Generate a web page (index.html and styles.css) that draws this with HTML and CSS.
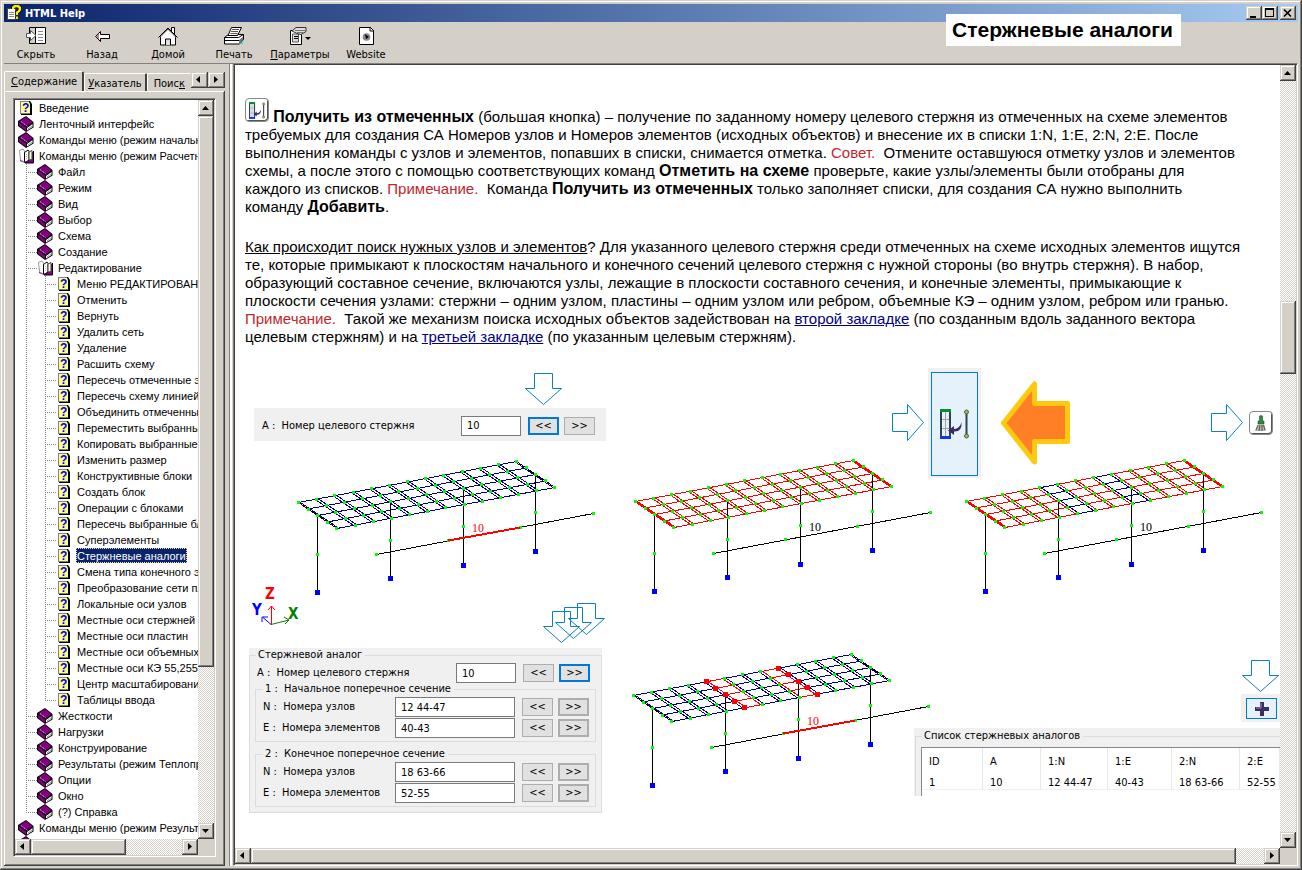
FILE: index.html
```
<!DOCTYPE html>
<html lang="ru">
<head>
  <meta charset="UTF-8">
  <meta name="viewport" content="width=device-width, initial-scale=1.0">
  <title>HTML Help</title>
  <link rel="stylesheet" href="styles.css">
</head>
<body>
  <svg class="sprite" aria-hidden="true">
    <symbol id="book" viewBox="0 0 16 16">
      <path d="M0 5v5l8 6 7.500-4.500V6L8 0z" fill="#000"/>
      <path d="M9 12l5.500-4v3L9 14.500z" fill="#fff"/>
      <path d="M10 13l4-3" stroke="#999" stroke-width="1"/>
      <path d="M1 5.500L8 1l6.500 5L9 10.500z" fill="#800080"/>
      <path d="M1 6.500l7 5V15L1 9.500z" fill="#800080"/>
      <path d="M3 5.500l6.500 5" stroke="#fff" stroke-dasharray="1 1" stroke-width=".8"/>
    </symbol>
    <symbol id="openbook" viewBox="0 0 16 16">
      <path d="M2 4v9l5 2h8V4" fill="#800080"/>
      <path d="M15.500 3v12H7" fill="none" stroke="#000"/>
      <path d="M1.500 2.500L5 1l1.500 2v11l-4-2z" fill="#fff" stroke="#999"/>
      <path d="M6.500 14V4.500L10 2l1 1.500V12L8 14z" fill="#fff" stroke="#000"/>
      <path d="M11 12V4l3-1.500v9z" fill="#ffd" stroke="#444"/>
      <path d="M8.500 6v5" stroke="#bbb" stroke-dasharray="1 1"/>
    </symbol>
    <symbol id="page" viewBox="0 0 16 16">
      <path d="M3 1h9l2 3v11H3z" fill="#000"/>
      <path d="M2 1h9v3h1v10H2z" fill="#808080"/>
      <path d="M3 2h8l1 2v9H3z" fill="#ffff90"/>
      <text x="4" y="12" font-family="Liberation Sans" font-size="12" font-weight="bold" fill="#0000e0">?</text>
    </symbol>
    <symbol id="up" viewBox="0 0 16 16"><path d="M4 10h7L7.500 6z"/></symbol>
    <symbol id="down" viewBox="0 0 16 16"><path d="M4 6h7l-3.500 4z"/></symbol>
    <symbol id="left" viewBox="0 0 16 16"><path d="M9 4v7L5 7.500z"/></symbol>
    <symbol id="right" viewBox="0 0 16 16"><path d="M6 4v7l4-3.500z"/></symbol>
    <symbol id="arrow-down" viewBox="0 0 38 33">
      <path d="M9.500 .5h18v15h9L18.500 31.500 .5 15.500h9z" fill="none" stroke="#0a7fc2"/>
    </symbol>
    <symbol id="arrow-right" viewBox="0 0 33 38">
      <path d="M.5 9.500h15v-9L31.500 18.500 15.500 36.500v-9H.5z" fill="none" stroke="#0a7fc2"/>
    </symbol>
    <symbol id="collect" viewBox="0 0 29 30">
      <path d="M0 0h11v30H0z" fill="#2c4450"/>
      <path d="M2 3h7v24H2z" fill="#e8eff4"/>
      <path d="M5.500 3v24M2 10.500h7M2 19.500h7" stroke="#9aa4aa"/>
      <path d="M0 0h11v3H0z" fill="#009030"/>
      <path d="M0 27h11v3H0z" fill="#1432f0"/>
      <path d="M8 21.500l6-4.500v3q6-.5 7.500-7 1 10-7.500 9.500V26z" fill="#3c2c64"/>
      <path d="M26.500 3v24" stroke="#2c4450" stroke-width="2"/>
      <circle cx="26.500" cy="3" r="2" fill="#a6b070" stroke="#5c6430"/>
      <circle cx="26.500" cy="27" r="2" fill="#a6b070" stroke="#5c6430"/>
    </symbol>
  </svg>

  <div class="window">
    <header class="titlebar">
      <svg class="app-icon" width="16" height="16" viewBox="0 0 16 16">
        <path d="M1.500 3.500h8v11h-8z" fill="#fff" stroke="#444"/>
        <path d="M3 7.500h5M3 9.500h5M3 11.500h5" stroke="#888"/>
        <path d="M7 4q0-3 3.500-3T14 4q0 2-3 3.500V10M11 11.500V14" fill="none" stroke="#000" stroke-width="4"/>
        <path d="M7 4q0-3 3.500-3T14 4q0 2-3 3.500V10M11 11.500V14" fill="none" stroke="#ffeb00" stroke-width="2.400"/>
      </svg>
      <span class="caption">HTML Help</span>
      <button class="win-btn" aria-label="Свернуть"><svg width="14" height="12"><path d="M3 9h6v2H3z"/></svg></button>
      <button class="win-btn" aria-label="Развернуть"><svg width="14" height="12"><path d="M2 1h9v9H2zM3 3v6h7V3z" fill-rule="evenodd"/></svg></button>
      <button class="win-btn close" aria-label="Закрыть"><svg width="14" height="12"><path d="M3 2.500l7 7M10 2.500l-7 7" stroke="#000" stroke-width="1.600"/></svg></button>
    </header>

    <nav class="toolbar">
      <button class="tool">
        <svg width="22" height="20" viewBox="0 0 22 20">
          <path d="M4.500 1.500h16v16h-16z" fill="#fff" stroke="#000"/><path d="M5 2h5v15H5z" fill="#d4d0c8"/><path d="M10.500 2v15" stroke="#000"/>
          <path d="M13 5.500h5M13 8.500h5M13 11.500h5M13 14.500h5" stroke="#888"/>
          <path d="M1.500 7.500h4v-3L11 9.500l-5.500 5v-3h-4z" fill="#fff" stroke="#555"/>
        </svg>
        <span>Скрыть</span>
      </button>
      <button class="tool">
        <svg width="20" height="20" viewBox="0 0 20 20"><path d="M3.500 10.500l5-5v3h9v4h-9v3z" fill="#fff" stroke="#000"/><path d="M4 10.500l3-3v6z" fill="#b58a8a"/></svg>
        <span>Назад</span>
      </button>
      <button class="tool">
        <svg width="22" height="20" viewBox="0 0 22 20">
          <path d="M14.500 1.500h3v7h-3z" fill="#fff" stroke="#000"/><path d="M3.500 10v9h15v-9L11 3z" fill="#fff" stroke="#000"/>
          <path d="M1.500 11.500L11 2l9.500 9.500" fill="none" stroke="#000"/><path d="M3 11.500l8-8 8 8" fill="none" stroke="#aaa"/><path d="M8.500 19v-6h5v6" fill="#ddd" stroke="#000"/>
        </svg>
        <span>Домой</span>
      </button>
      <button class="tool">
        <svg width="22" height="20" viewBox="0 0 22 20">
          <path d="M1.500 11.500l4-3h15v5l-4 4.500h-15z" fill="#fff" stroke="#000"/><path d="M1.500 11.500h14l5-3M1.500 14.500h15l4-3" fill="none" stroke="#000"/>
          <path d="M5 9.500L8.500 1.500h10l-4 8z" fill="#fff" stroke="#000"/><path d="M9 3.500h7M8 5.500h7M7.500 7.500h7" stroke="#555"/><path d="M16 14l4-3v3l-4 4z" fill="#777"/><path d="M17 17.500h3" stroke="#0dd"/>
        </svg>
        <span>Печать</span>
      </button>
      <button class="tool">
        <svg width="22" height="20" viewBox="0 0 22 20">
          <path d="M1.500 4.500h11v14h-11z" fill="#fff" stroke="#000"/><path d="M3.500 8v8h6V8z" fill="#ddd" stroke="#555"/><path d="M5 10.500h4M5 12.500h4" stroke="#000"/>
          <path d="M3 5l4-3.500h10v4l-5 3-4-1z" fill="#ddd" stroke="#333"/><path d="M6 4.500h10M8 6.500h6" stroke="#777"/><path d="M16 11h6l-3 3z"/>
        </svg>
        <span><u>П</u>араметры</span>
      </button>
      <button class="tool">
        <svg width="20" height="20" viewBox="0 0 20 20"><path d="M3.500 1.500h11l3 3v14h-14z" fill="#fff" stroke="#000"/><path d="M14 1v4h4" fill="none" stroke="#000"/><circle cx="10.500" cy="11" r="3.800" fill="#888"/><path d="M9 8l4 3-3 2z" fill="#000"/></svg>
        <span>Website</span>
      </button>
    </nav>

    <h1 class="topic-title">Стержневые аналоги</h1>

    <div class="panes">
      <aside class="sidebar">
        <div class="tabs">
          <button class="tab active"><u>С</u>одержание</button>
          <button class="tab"><u>У</u>казатель</button>
          <button class="tab last">Поис<u>к</u></button>
          <button class="sb-btn" aria-label="Назад"><svg><use href="#left"/></svg></button>
          <button class="sb-btn" aria-label="Вперед"><svg><use href="#right"/></svg></button>
        </div>
        <div class="tab-page">
          <div class="scrollbox">
            <ul class="tree">
              <li><a href="#"><svg><use href="#page"/></svg>Введение</a></li>
              <li><a href="#"><svg><use href="#book"/></svg>Ленточный интерфейс</a></li>
              <li><a href="#"><svg><use href="#book"/></svg>Команды меню (режим начальный)</a></li>
              <li><a href="#"><svg><use href="#openbook"/></svg>Команды меню (режим Расчетная схема)</a>
                <ul>
                  <li><a href="#"><svg><use href="#book"/></svg>Файл</a></li>
                  <li><a href="#"><svg><use href="#book"/></svg>Режим</a></li>
                  <li><a href="#"><svg><use href="#book"/></svg>Вид</a></li>
                  <li><a href="#"><svg><use href="#book"/></svg>Выбор</a></li>
                  <li><a href="#"><svg><use href="#book"/></svg>Схема</a></li>
                  <li><a href="#"><svg><use href="#book"/></svg>Создание</a></li>
                  <li><a href="#"><svg><use href="#openbook"/></svg>Редактирование</a>
                    <ul>
                      <li><a href="#"><svg><use href="#page"/></svg>Меню РЕДАКТИРОВАНИЕ</a></li>
                      <li><a href="#"><svg><use href="#page"/></svg>Отменить</a></li>
                      <li><a href="#"><svg><use href="#page"/></svg>Вернуть</a></li>
                      <li><a href="#"><svg><use href="#page"/></svg>Удалить сеть</a></li>
                      <li><a href="#"><svg><use href="#page"/></svg>Удаление</a></li>
                      <li><a href="#"><svg><use href="#page"/></svg>Расшить схему</a></li>
                      <li><a href="#"><svg><use href="#page"/></svg>Пересечь отмеченные элементы</a></li>
                      <li><a href="#"><svg><use href="#page"/></svg>Пересечь схему линией</a></li>
                      <li><a href="#"><svg><use href="#page"/></svg>Объединить отмеченные</a></li>
                      <li><a href="#"><svg><use href="#page"/></svg>Переместить выбранные</a></li>
                      <li><a href="#"><svg><use href="#page"/></svg>Копировать выбранные</a></li>
                      <li><a href="#"><svg><use href="#page"/></svg>Изменить размер</a></li>
                      <li><a href="#"><svg><use href="#page"/></svg>Конструктивные блоки</a></li>
                      <li><a href="#"><svg><use href="#page"/></svg>Создать блок</a></li>
                      <li><a href="#"><svg><use href="#page"/></svg>Операции с блоками</a></li>
                      <li><a href="#"><svg><use href="#page"/></svg>Пересечь выбранные блоки</a></li>
                      <li><a href="#"><svg><use href="#page"/></svg>Суперэлементы</a></li>
                      <li><a href="#"><svg><use href="#page"/></svg><span class="selected">Стержневые аналоги</span></a></li>
                      <li><a href="#"><svg><use href="#page"/></svg>Смена типа конечного элемента</a></li>
                      <li><a href="#"><svg><use href="#page"/></svg>Преобразование сети пластин</a></li>
                      <li><a href="#"><svg><use href="#page"/></svg>Локальные оси узлов</a></li>
                      <li><a href="#"><svg><use href="#page"/></svg>Местные оси стержней</a></li>
                      <li><a href="#"><svg><use href="#page"/></svg>Местные оси пластин</a></li>
                      <li><a href="#"><svg><use href="#page"/></svg>Местные оси объемных</a></li>
                      <li><a href="#"><svg><use href="#page"/></svg>Местные оси КЭ 55,255</a></li>
                      <li><a href="#"><svg><use href="#page"/></svg>Центр масштабирования</a></li>
                      <li><a href="#"><svg><use href="#page"/></svg>Таблицы ввода</a></li>
                    </ul>
                  </li>
                  <li><a href="#"><svg><use href="#book"/></svg>Жесткости</a></li>
                  <li><a href="#"><svg><use href="#book"/></svg>Нагрузки</a></li>
                  <li><a href="#"><svg><use href="#book"/></svg>Конструирование</a></li>
                  <li><a href="#"><svg><use href="#book"/></svg>Результаты (режим Теплопроводность)</a></li>
                  <li><a href="#"><svg><use href="#book"/></svg>Опции</a></li>
                  <li><a href="#"><svg><use href="#book"/></svg>Окно</a></li>
                  <li><a href="#"><svg><use href="#book"/></svg>(?) Справка</a></li>
                </ul>
              </li>
              <li><a href="#"><svg><use href="#book"/></svg>Команды меню (режим Результаты)</a></li>
              <li><a href="#"><svg><use href="#book"/></svg></a></li>
            </ul>
            <div class="vscroll">
              <button class="sb-btn" aria-label="Вверх"><svg><use href="#up"/></svg></button>
              <div class="thumb tree-v"></div>
              <button class="sb-btn end" aria-label="Вниз"><svg><use href="#down"/></svg></button>
            </div>
            <div class="hscroll">
              <button class="sb-btn" aria-label="Влево"><svg><use href="#left"/></svg></button>
              <div class="thumb tree-h"></div>
              <button class="sb-btn end" aria-label="Вправо"><svg><use href="#right"/></svg></button>
            </div>
          </div>
        </div>
      </aside>
      <div class="splitter"></div>

      <main class="scrollbox doc-frame">
        <article class="doc">
          <p>
            <span class="icon-key"><svg width="16" height="17"><use href="#collect"/></svg></span> <b>Получить из отмеченных</b> (большая кнопка) – получение по заданному номеру целевого стержня из отмеченных на схеме элементов<br>
            требуемых для создания СА Номеров узлов и Номеров элементов (исходных объектов) и внесение их в списки 1:N, 1:E, 2:N, 2:E. После<br>
            выполнения команды с узлов и элементов, попавших в списки, снимается отметка. <span class="note">Совет.</span>&nbsp; Отмените оставшуюся отметку узлов и элементов<br>
            схемы, а после этого с помощью соответствующих команд <b>Отметить на схеме</b> проверьте, какие узлы/элементы были отобраны для<br>
            каждого из списков. <span class="note">Примечание.</span>&nbsp; Команда <b>Получить из отмеченных</b> только заполняет списки, для создания СА нужно выполнить<br>
            команду <b>Добавить</b>.
          </p>
          <p>
            <u>Как происходит поиск нужных узлов и элементов</u>? Для указанного целевого стержня среди отмеченных на схеме исходных элементов ищутся<br>
            те, которые примыкают к плоскостям начального и конечного сечений целевого стержня с нужной стороны (во внутрь стержня). В набор,<br>
            образующий составное сечение, включаются узлы, лежащие в плоскости составного сечения, и конечные элементы, примыкающие к<br>
            плоскости сечения узлами: стержни – одним узлом, пластины – одним узлом или ребром, объемные КЭ – одним узлом, ребром или гранью.<br>
            <span class="note">Примечание.</span>&nbsp; Такой же механизм поиска исходных объектов задействован на <a href="#">второй закладке</a> (по созданным вдоль заданного вектора<br>
            целевым стержням) и на <a href="#">третьей закладке</a> (по указанным целевым стержням).
          </p>

          <div class="figure">
            <div class="fig-left">
              <svg class="hint-arrow" width="38" height="33"><use href="#arrow-down"/></svg>
              <div class="strip field">
                <label for="rod">A :&nbsp; Номер целевого стержня</label>
                <input id="rod" class="short" value="10">
                <button class="btn focus">&lt;&lt;</button>
                <button class="btn">&gt;&gt;</button>
              </div>
              <svg class="scheme" data-target="red" data-mesh="#000080" data-picked="#000080" width="304" height="142"></svg>
              <div class="fig-axes">
                <svg class="axes" width="50" height="44">
                  <path d="M20.500 40V21M17 25l3.500-4 3.500 4" stroke="#f00"/>
                  <path d="M20 39.500l18-4.500M33 32l5 3-4 4" stroke="#008000"/>
                  <path d="M20 39.500l-8-7M11 37v-5h6" stroke="#00f"/>
                  <text x="14" y="14" fill="#f00">Z</text>
                  <text x="1" y="30" fill="#00f">Y</text>
                  <text x="37" y="34" fill="#008000">X</text>
                </svg>
                <svg width="63" height="42">
                  <use href="#arrow-down" x="0" y="8" width="38" height="33"/>
                  <use href="#arrow-down" x="12" y="4" width="38" height="33"/>
                  <use href="#arrow-down" x="25" y="0" width="38" height="33"/>
                </svg>
              </div>
              <div class="analog">
                <fieldset class="outer">
                  <legend>Стержневой аналог</legend>
                  <div class="field target">
                    <label for="a">A :&nbsp; Номер целевого стержня</label>
                    <input id="a" class="short" value="10">
                    <button class="btn">&lt;&lt;</button>
                    <button class="btn focus">&gt;&gt;</button>
                  </div>
                  <fieldset>
                    <legend>1 :&nbsp; Начальное поперечное сечение</legend>
                    <div class="field">
                      <label for="n1">N :&nbsp; Номера узлов</label>
                      <input id="n1" value="12 44-47">
                      <button class="btn">&lt;&lt;</button>
                      <button class="btn thick">&gt;&gt;</button>
                    </div>
                    <div class="field">
                      <label for="e1">E :&nbsp; Номера элементов</label>
                      <input id="e1" value="40-43">
                      <button class="btn">&lt;&lt;</button>
                      <button class="btn thick">&gt;&gt;</button>
                    </div>
                  </fieldset>
                  <fieldset>
                    <legend>2 :&nbsp; Конечное поперечное сечение</legend>
                    <div class="field">
                      <label for="n2">N :&nbsp; Номера узлов</label>
                      <input id="n2" value="18 63-66">
                      <button class="btn">&lt;&lt;</button>
                      <button class="btn thick">&gt;&gt;</button>
                    </div>
                    <div class="field">
                      <label for="e2">E :&nbsp; Номера элементов</label>
                      <input id="e2" value="52-55">
                      <button class="btn">&lt;&lt;</button>
                      <button class="btn thick">&gt;&gt;</button>
                    </div>
                  </fieldset>
                </fieldset>
              </div>
            </div>

            <div class="fig-right">
              <div class="fig-head">
                <svg width="33" height="38"><use href="#arrow-right"/></svg>
                <div class="strip big-frame">
                  <button class="big-btn" aria-label="Получить из отмеченных"><svg width="29" height="30"><use href="#collect"/></svg></button>
                </div>
                <svg class="orange" width="70" height="86" viewBox="0 0 70 86"><path d="M2.500 43L33.500 4v19.500h33v38h-33V82z" fill="#ff7f27" stroke="#ffc90e" stroke-width="5" stroke-linejoin="round"/></svg>
                <svg class="to-clear" width="33" height="38"><use href="#arrow-right"/></svg>
                <button class="icon-key" aria-label="Снять отметку">
                  <svg width="16" height="17" viewBox="0 0 16 17"><path d="M6.500 1q1.500-1 3 0v5h1.500v3H5V6h1.500z" fill="#2f8a40" stroke="#145020" stroke-width=".6"/><path d="M5 9h6l2 7H2z" fill="#b4b8a8"/><path d="M5 10l-2 5M7 10l-1 6M9 10v6M10.500 10l1.500 5" stroke="#555"/></svg>
                </button>
              </div>
              <div class="fig-row">
                <svg class="scheme" data-mesh="#f00" data-picked="#f00" data-beam="red" width="304" height="142"></svg>
                <svg class="scheme" data-mesh="#f00" data-picked="#000080" data-beam="red" width="304" height="142"></svg>
              </div>
              <div class="fig-bottom">
                <svg class="scheme" data-target="red" data-mesh="#000080" data-picked="#f00" data-nodes="red" width="304" height="142"></svg>
                <div class="result">
                  <svg width="38" height="33"><use href="#arrow-down"/></svg>
                  <div class="strip add-frame">
                    <button class="add-btn" aria-label="Добавить"><svg width="14" height="14"><path d="M5 0h4v5h5v4H9v5H5V9H0V5h5z" fill="#3c2c64"/><path d="M6 1v5H1" fill="none" stroke="#9a8fc0"/></svg></button>
                  </div>
                  <div class="list">
                    <fieldset>
                      <legend>Список стержневых аналогов</legend>
                      <table>
                        <colgroup><col class="c1"><col class="c2"><col class="c3"><col class="c4"><col class="c5"><col></colgroup>
                        <thead><tr><th>ID</th><th>A</th><th>1:N</th><th>1:E</th><th>2:N</th><th>2:E</th></tr></thead>
                        <tbody><tr><td>1</td><td>10</td><td>12 44-47</td><td>40-43</td><td>18 63-66</td><td>52-55</td></tr></tbody>
                      </table>
                    </fieldset>
                  </div>
                </div>
              </div>
            </div>
          </div>
        </article>
        <div class="vscroll">
          <button class="sb-btn" aria-label="Вверх"><svg><use href="#up"/></svg></button>
          <div class="thumb doc-v"></div>
          <button class="sb-btn end" aria-label="Вниз"><svg><use href="#down"/></svg></button>
        </div>
        <div class="hscroll">
          <button class="sb-btn" aria-label="Влево"><svg><use href="#left"/></svg></button>
          <div class="thumb doc-h"></div>
          <button class="sb-btn end" aria-label="Вправо"><svg><use href="#right"/></svg></button>
        </div>
      </main>
    </div>
  </div>
  <script src="script.js"></script>
</body>
</html>
```
FILE: styles.css
```
* {
  box-sizing: border-box;
}
body {
  margin: 0;
  font-family: "DejaVu Sans Condensed", "Noto Sans", sans-serif;
  font-size: 11px;
  color: #000;
}
button {
  font: inherit;
  color: inherit;
  padding: 0;
  border-radius: 0;
}
svg {
  display: block;
  flex: none;
}
.sprite {
  display: none;
}

/* window */
.window {
  position: relative;
  display: flex;
  flex-direction: column;
  height: 100vh;
  padding: 4px;
  background: #d4d0c8;
  box-shadow: inset -1px -1px #404040, inset 1px 1px #d4d0c8, inset -2px -2px #808080, inset 2px 2px #fff;
}
.titlebar {
  display: flex;
  align-items: center;
  height: 18px;
  padding: 0 2px;
  background: linear-gradient(90deg, #0a246a, #a6caf0);
}
.caption {
  flex: 1;
  padding-left: 3px;
  color: #fff;
  font-weight: bold;
}
.win-btn, .sb-btn, .thumb {
  flex: none;
  background: #d4d0c8;
  border: none;
  box-shadow: inset -1px -1px #404040, inset 1px 1px #d4d0c8, inset -2px -2px #808080, inset 2px 2px #fff;
}
.win-btn {
  width: 16px;
  height: 14px;
  padding: 1px;
}
.win-btn.close {
  margin-left: 2px;
}
.toolbar {
  display: flex;
  height: 41px;
  margin-left: -1px;
}
.tool {
  display: flex;
  flex-direction: column;
  align-items: center;
  width: 66px;
  padding-top: 4px;
  background: none;
  border: none;
  line-height: 18px;
}
.topic-title {
  position: absolute;
  top: 14px;
  right: 121px;
  margin: 0;
  padding: 0 8px 0 6px;
  background: #fff;
  font: bold 21px/32px "Liberation Sans", Arial, sans-serif;
}
.panes {
  display: flex;
  flex: 1;
  min-height: 0;
}

/* contents pane */
.sidebar {
  display: flex;
  flex-direction: column;
  width: 221px;
  padding-top: 8px;
  border-top: 1px solid #808080;
}
.tabs {
  display: flex;
  align-items: flex-end;
  height: 19px;
}
.tab {
  height: 18px;
  padding: 1px 3px 0;
  background: #d4d0c8;
  border: 1px solid #fff;
  border-right: 2px solid #404040;
  border-bottom: none;
  border-radius: 2px 2px 0 0;
  white-space: nowrap;
}
.tab.active {
  height: 21px;
  padding: 0 5px 2px 6px;
  margin-bottom: -1px;
}
.tab.last {
  flex: 1;
  border-right: none;
}
.tabs .sb-btn {
  align-self: flex-start;
  width: 17px;
}
.tab-page {
  flex: 1;
  min-height: 0;
  padding: 7px 9px 9px;
  box-shadow: inset -1px -1px #404040, inset 1px 1px #fff, inset -2px -2px #808080;
}
.scrollbox {
  display: grid;
  grid-template-columns: minmax(0, 1fr) 16px;
  grid-template-rows: minmax(0, 1fr) 16px;
  height: 100%;
  border: 1px solid;
  border-color: #808080 #fff #fff #808080;
  box-shadow: inset 1px 1px #404040;
  padding: 1px;
}
.tree, .tree ul {
  margin: 0;
  padding: 0;
  list-style: none;
}
.tree {
  overflow: hidden;
  background: #fff;
  font-family: "Liberation Sans", Arial, sans-serif;
}
.tree a {
  display: flex;
  gap: 5px;
  height: 16px;
  padding-left: 3px;
  line-height: 16px;
  color: #000;
  text-decoration: none;
  white-space: nowrap;
}
.tree svg {
  width: 16px;
  height: 16px;
}
.tree ul {
  margin-left: 11px;
}
/* dotted connectors */
.tree ul > li {
  padding-left: 8px;
  background:
    repeating-linear-gradient(#808080 0 1px, transparent 1px 2px) 0 0 / 1px 100% no-repeat,
    repeating-linear-gradient(90deg, #808080 0 1px, transparent 1px 2px) 0 8px / 11px 1px no-repeat;
}
.tree ul > li:last-child {
  background-size: 1px 8px, 11px 1px;
}
.selected {
  height: 15px;
  margin-left: -1px;
  padding: 0 1px;
  background: #0a246a;
  color: #fff;
  outline: 1px dotted #f5db95;
  outline-offset: -1px;
}
.vscroll, .hscroll {
  display: flex;
  background: repeating-conic-gradient(#fff 0 25%, #d4d0c8 0 50%) 0 0 / 2px 2px;
}
.vscroll {
  flex-direction: column;
}
.sb-btn {
  width: 16px;
  height: 16px;
}
.sb-btn svg {
  width: 16px;
  height: 16px;
}
.sb-btn.end {
  margin-top: auto;
}
.hscroll .end {
  margin: 0 0 0 auto;
}
.tree-v {
  height: 551px;
}
.tree-h {
  width: 52%;
}
.doc-v {
  height: 73px;
  margin-top: 220px;
}
.doc-h {
  flex: 0 1 985px;
}
.splitter {
  width: 8px;
  border-top: 1px solid #808080;
  background: linear-gradient(90deg, #d4d0c8 4px, #808080 4px 5px, #fff 5px 7px, #d4d0c8 7px);
}

/* topic */
.doc-frame {
  flex: 1;
  min-width: 0;
  background: #d4d0c8;
}
.doc {
  overflow: hidden;
  padding: 33px 0 0 10px;
  background: #fff;
  font-family: "Liberation Sans", Arial, sans-serif;
  font-size: 15px;
  line-height: 18px;
}
.doc p {
  margin: 0 0 22px;
  white-space: nowrap;
}
.doc b {
  font-size: 16px;
}
.doc p a {
  color: #000080;
}
.note {
  color: #c0272d;
}
.icon-key {
  display: inline-block;
  overflow: hidden;
  width: 24px;
  height: 24px;
  padding: 3px;
  background: #fff;
  border: 1px solid #888;
  border-radius: 4px;
  box-shadow: inset -1px -1px #555;
}

/* illustration */
.figure {
  display: flex;
  font-family: "DejaVu Sans Condensed", "Noto Sans", sans-serif;
  font-size: 11px;
  line-height: 12px;
}
.fig-left {
  flex: 0 0 375px;
}
.hint-arrow {
  margin: 5px 0 2px 280px;
}
.strip {
  background: #f0f0f0;
}
.field {
  display: flex;
  align-items: center;
}
.field label {
  flex: 1;
}
.field input {
  width: 120px;
  height: 20px;
  margin-right: 7px;
  padding: 0 5px;
  background: #fff;
  border: 1px solid #7a7a7a;
  font: inherit;
}
.field .short {
  width: 60px;
}
.btn {
  width: 31px;
  height: 18px;
  background: #e1e1e1;
  border: 1px solid #adadad;
}
.btn + .btn {
  margin-left: 5px;
}
.btn.thick {
  border-width: 2px;
}
.btn.focus {
  border: 2px solid #0078d7;
}
.fig-left > .strip {
  width: 352px;
  height: 33px;
  margin-left: 9px;
  padding: 2px 11px 0 8px;
}
.scheme {
  overflow: visible;
  shape-rendering: crispEdges;
}
.scheme text {
  font: 12px "Liberation Serif", "Times New Roman", serif;
}
.fig-left .scheme {
  margin: 15px 0 0 49px;
}
.fig-axes {
  display: flex;
  justify-content: space-between;
  align-items: flex-end;
  height: 60px;
  margin: -13px 14px 3px 6px;
}
.axes {
  align-self: flex-start;
  fill: none;
}
.axes text {
  font: bold 15px "DejaVu Sans Condensed", "Noto Sans", sans-serif;
}
.analog {
  width: 353px;
  margin-left: 4px;
  padding-top: 1px;
  background: #f0f0f0;
}
fieldset {
  min-width: 0;
  margin: 0;
  padding: 2px 6px 3px 7px;
  border: 1px solid #dcdcdc;
}
legend {
  padding: 0 3px 0 2px;
}
fieldset fieldset + fieldset {
  margin-top: 6px;
}
.outer {
  padding: 2px 5px 5px;
}
.outer > legend {
  margin-left: 1px;
}
.target {
  padding: 0 6px 0 2px;
}
fieldset fieldset .field + .field {
  margin-top: 1px;
}
.fig-right {
  flex: 1;
  min-width: 0;
}
.fig-head {
  display: flex;
  align-items: center;
  height: 110px;
  padding: 0 7px 0 272px;
}
.big-frame {
  height: 110px;
  margin: 0 20px 0 3px;
  padding: 4px 3px 2px;
}
.big-btn {
  display: flex;
  align-items: center;
  justify-content: center;
  width: 47px;
  height: 104px;
  background: #e5f1fb;
  border: 1px solid #0078d7;
}
.to-clear {
  margin: 0 5px 0 auto;
}
.fig-row {
  display: flex;
  gap: 27px;
  margin: -23px 0 52px 11px;
}
.fig-bottom {
  display: flex;
  padding-left: 9px;
}
.result {
  display: flex;
  flex: 1;
  flex-direction: column;
  align-items: flex-end;
  min-width: 0;
  margin-left: -19px;
  padding-top: 11px;
}
.add-frame {
  width: 39px;
  height: 28px;
  margin: 1px 0 6px;
  padding: 4px 3px 3px 5px;
}
.add-btn {
  display: flex;
  align-items: center;
  justify-content: center;
  width: 31px;
  height: 21px;
  background: #e5f1fb;
  border: 1px solid #0078d7;
}
.list {
  width: 100%;
  padding: 2px 0 0 1px;
  background: #f0f0f0;
}
.list fieldset {
  padding: 5px 0 0 5px;
  border-width: 1px 0 0 1px;
}
.list legend {
  margin-left: 1px;
}
table {
  width: 100%;
  padding-bottom: 6px;
  table-layout: fixed;
  border-collapse: separate;
  border-spacing: 0;
  background: #fff;
  border: 1px solid #828790;
  border-width: 1px 0 0 1px;
}
th, td {
  height: 14px;
  padding: 0 0 0 7px;
  border-right: 1px solid #e8e8e8;
  font-weight: normal;
  text-align: left;
  white-space: nowrap;
}
td {
  border-bottom: 1px solid #f0f0f0;
}
th {
  height: 28px;
}
.c1 {
  width: 61px;
}
.c2 {
  width: 58px;
}
.c3 {
  width: 67px;
}
.c4 {
  width: 64px;
}
.c5 {
  width: 68px;
}
```
FILE: script.js
```
const SPANS = 12;
const ROWS = 4;
const picked = [4, 7];

function node(i, j) {
  return [4.5 + i * 18.17 + j * 9.6, 46.5 - i * 3.42 + j * 6.5];
}
function line(a, b, color, width = 1) {
  return `<path d="M${a}L${b}" stroke="${color}" stroke-width="${width}"/>`;
}
function dot(p, color, size) {
  return `<rect x="${Math.round(p[0] - size / 2)}" y="${Math.round(p[1] - size / 2)}" width="${size}" height="${size}" fill="${color}"/>`;
}

document.querySelectorAll('.scheme').forEach(function (svg) {
  const data = svg.dataset;
  let out = '';
  // plates, each one pulled in a little from its side nodes
  for (let i = 0; i < SPANS; i++) {
    for (let j = 0; j < ROWS; j++) {
      const pts = [node(i + .09, j), node(i + .91, j), node(i + .91, j + 1), node(i + .09, j + 1)];
      const color = picked.includes(i) ? data.picked : data.mesh;
      out += `<polygon points="${pts.join(' ')}" fill="none" stroke="${color}"/>`;
    }
  }
  for (const i of [0, SPANS]) {
    out += line(node(i, 0), node(i, ROWS), data.beam || '#000', data.beam ? 2 : 1);
  }
  // columns
  for (let i = 0; i <= SPANS; i += 4) {
    const top = node(i, 2);
    const x = Math.floor(top[0]) + .5;
    out += line([x, top[1]], [x, top[1] + 77], '#000');
    out += dot([x, top[1] + 38.5], '#0f0', 3) + dot([x, top[1] + 77], '#00f', 5);
  }
  // target rod
  const rod = [[82.5, 98.5], [154.5, 84.5], [226.5, 71.5], [299.5, 57.5]];
  out += line(rod[0], rod[3], '#000');
  rod.forEach(p => out += dot(p, '#0f0', 3));
  if (data.target) out += line(rod[1], rod[2], data.target, 2);
  out += `<text x="178" y="76" fill="${data.target || '#000'}">10</text>`;

  for (let i = 0; i <= SPANS; i++) {
    for (let j = 0; j <= ROWS; j++) {
      const marked = data.nodes && (i === 4 || i === 8);
      out += dot(node(i, j), marked ? data.nodes : '#0f0', marked ? 5 : 3);
    }
  }
  svg.innerHTML = out;
});
```
